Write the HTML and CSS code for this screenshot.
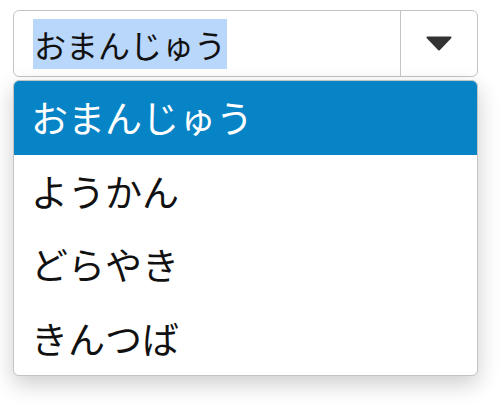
FILE: index.html
```html
<!DOCTYPE html>
<html lang="ja">

<head>
    <meta charset="UTF-8">
    <meta name="viewport" content="width=device-width, initial-scale=1.0">
    <title>Combo</title>
    <link rel="stylesheet" href="styles.css">
</head>

<body>
    <div class="combo">
        <div class="combo-head">
            <div class="field"><span class="picked">おまんじゅう</span></div>
            <div class="toggle">
                <svg width="26" height="15" viewBox="0 0 26 15">
                    <polygon points="1.5,1.5 24.5,1.5 13,13.5" fill="#333" stroke="#333" stroke-width="2" stroke-linejoin="round" />
                </svg>
            </div>
        </div>
        <ul class="menu">
            <li class="item active">おまんじゅう</li>
            <li class="item">ようかん</li>
            <li class="item">どらやき</li>
            <li class="item">きんつば</li>
        </ul>
    </div>
</body>

</html>
```
FILE: styles.css
```css
html,
body {
    margin: 0;
    height: 411px;
    background: #fff;
    font-family: "Noto Sans CJK JP", "Liberation Sans", sans-serif;
    color: #111;
}

.combo {
    width: 465px;
    padding: 10px 0 34px 13px;
}

.combo-head {
    display: flex;
    height: 67px;
    box-sizing: border-box;
    border: 1px solid #c4c4c4;
    border-radius: 6px;
    background: #fff;
}

.field {
    flex: 1;
    padding: 8px 0 0 20px;
    font-size: 32px;
    line-height: 50px;
}

.picked {
    display: inline-block;
    background: #b9d7fb;
    padding: 0 1px;
    margin-left: -1px;
}

.toggle {
    width: 76px;
    border-left: 1px solid #c4c4c4;
    display: flex;
    align-items: center;
    justify-content: center;
}

.menu {
    list-style: none;
    margin: 3px 0 0;
    padding: 0;
    border: 1px solid #c4c4c4;
    border-radius: 6px;
    overflow: hidden;
    background: #fff;
    box-shadow: 0 8px 22px rgba(0, 0, 0, 0.2);
}

.item {
    height: 73.5px;
    line-height: 73.5px;
    padding-left: 17px;
    font-size: 37px;
    color: #111;
}

.item.active {
    background: #0784c6;
    color: #fff;
}
```
